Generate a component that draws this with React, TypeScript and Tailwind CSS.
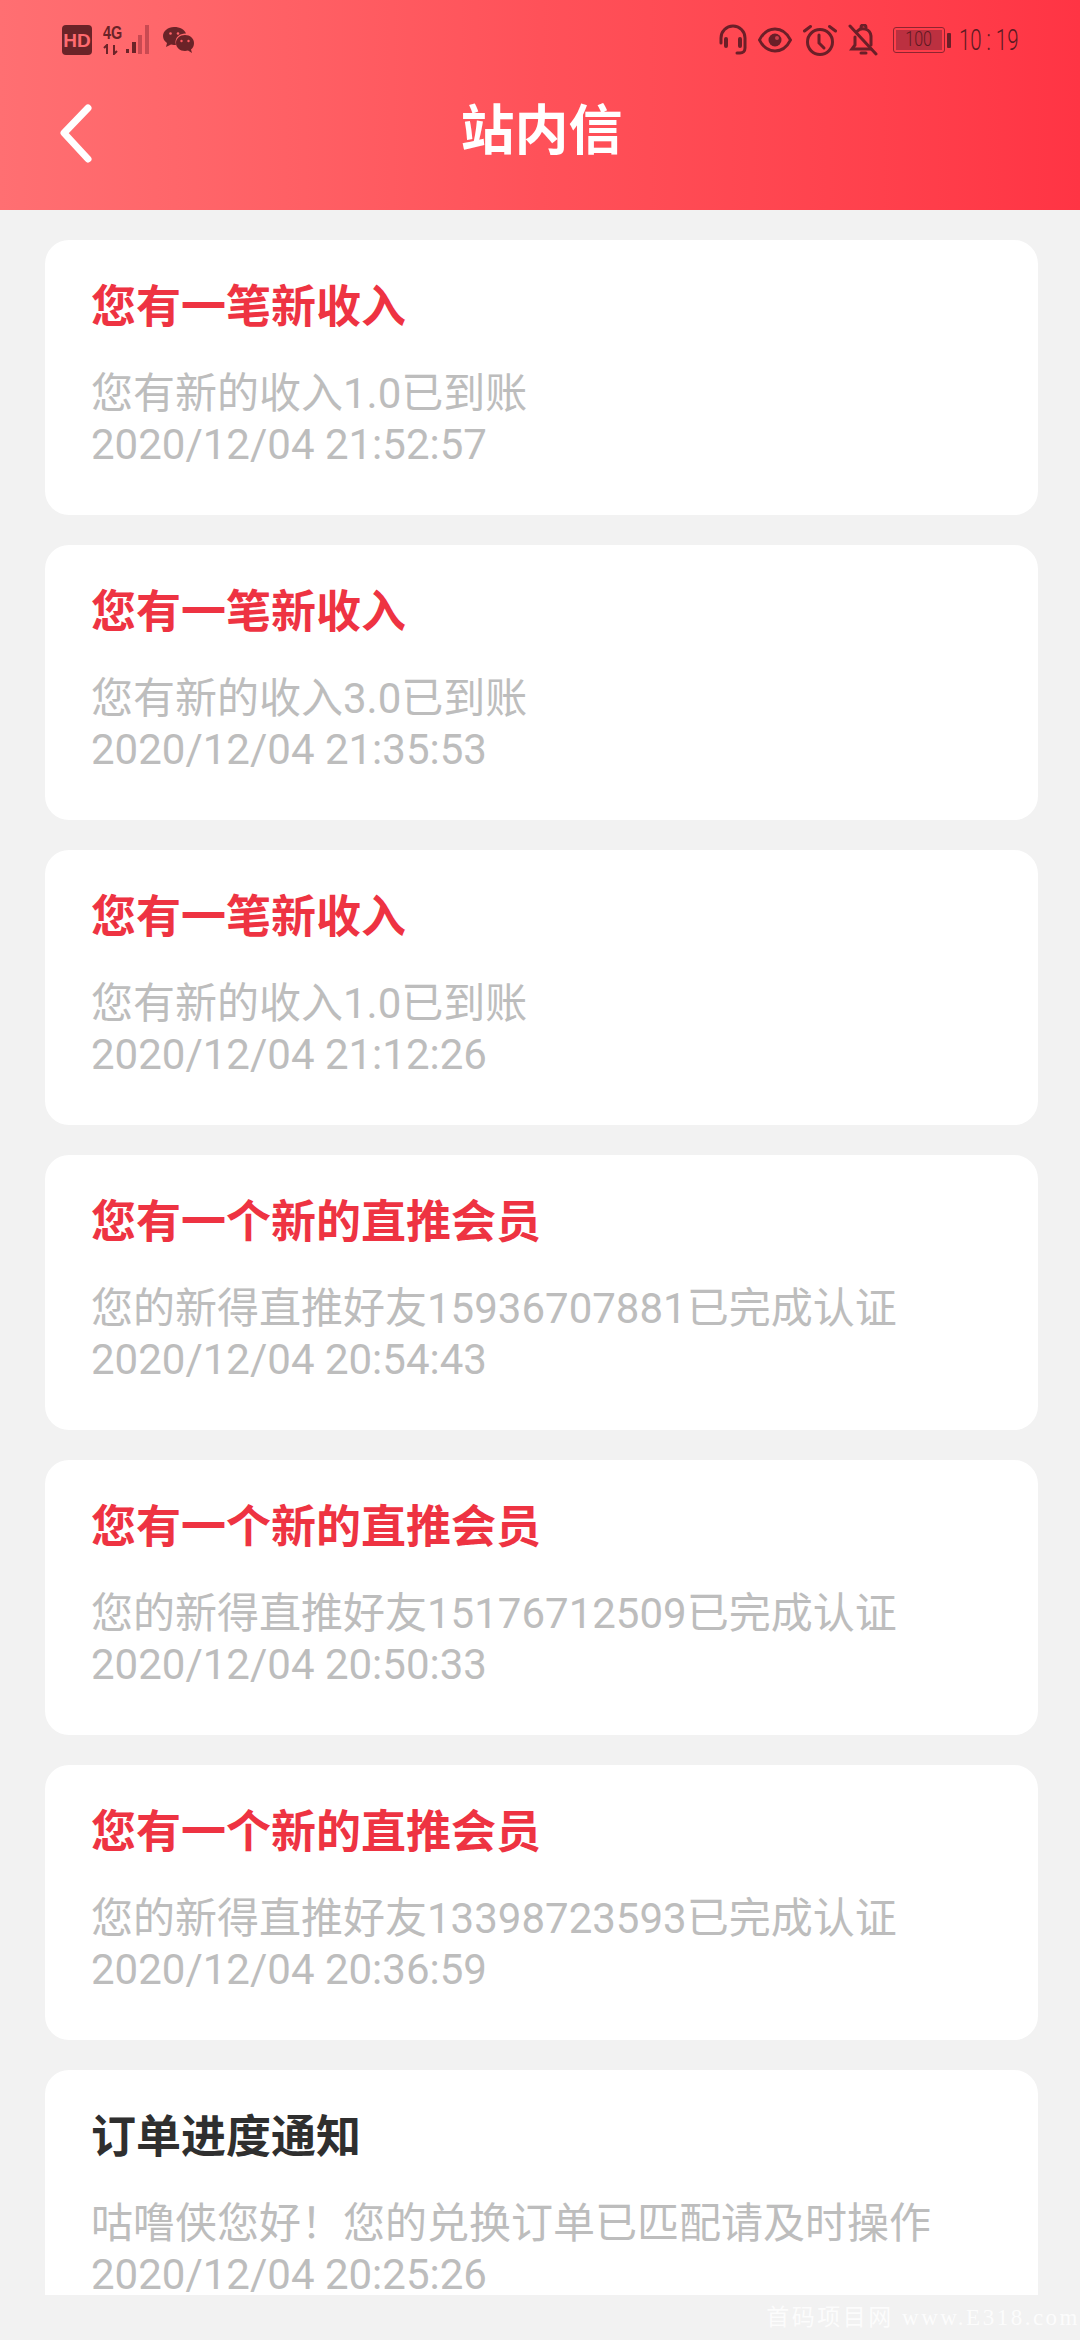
const font = { fontFamily: '"Roboto", "Noto Sans CJK SC", sans-serif' };

const items = [
  { t: "您有一笔新收入", b: "您有新的收入1.0已到账", d: "2020/12/04 21:52:57", red: true },
  { t: "您有一笔新收入", b: "您有新的收入3.0已到账", d: "2020/12/04 21:35:53", red: true },
  { t: "您有一笔新收入", b: "您有新的收入1.0已到账", d: "2020/12/04 21:12:26", red: true },
  { t: "您有一个新的直推会员", b: "您的新得直推好友15936707881已完成认证", d: "2020/12/04 20:54:43", red: true },
  { t: "您有一个新的直推会员", b: "您的新得直推好友15176712509已完成认证", d: "2020/12/04 20:50:33", red: true },
  { t: "您有一个新的直推会员", b: "您的新得直推好友13398723593已完成认证", d: "2020/12/04 20:36:59", red: true },
  { t: "订单进度通知", b: "咕噜侠您好！您的兑换订单已匹配请及时操作", d: "2020/12/04 20:25:26", red: false },
];

const DARK = "#6b1f28";

function LeftStatus() {
  return (
    <div className="flex items-center">
      <div className="w-[30px] h-[30px] rounded-[4px] bg-[#6b2328] text-[#ff6b70] text-[19px] font-bold flex items-center justify-center leading-none" style={{ fontFamily: '"Liberation Sans", sans-serif' }}>HD</div>
      <div className="ml-[11px] w-[18px] flex flex-col items-start">
        <span className="text-[#6b2328] text-[18px] leading-[15px] font-bold scale-x-[0.8] origin-left" style={{ fontFamily: '"Liberation Sans", sans-serif' }}>4G</span>
        <svg width="18" height="11" viewBox="0 0 18 11" className="mt-[3px]">
          <path d="M4 10V1L1 4M11 1v9l3-3" fill="none" stroke="#6b2328" strokeWidth="2" />
        </svg>
      </div>
      <svg width="26" height="32" viewBox="0 0 26 32" className="ml-[5px]">
        <rect x="0" y="25" width="3" height="4" fill="#6b2328" />
        <rect x="6" y="18" width="4" height="11" fill="#6b2328" />
        <rect x="12" y="11" width="4" height="19" fill="#c94a52" />
        <rect x="19" y="1" width="4" height="29" fill="#c94a52" />
      </svg>
      <svg width="32" height="28" viewBox="0 0 32 28" className="ml-[11px]">
        <path d="M11 1C5 1 0 5 0 10c0 3 1.500 5 4 7l-1 4 5-2.500c1 .3 2 .4 3 .4 1 0 1.500-.1 2-.2-.3-1-.5-1.800-.5-2.700C12.500 11 17 7.500 22 7.500c.4 0 .7 0 1 .1C21.800 3.600 17 1 11 1z" fill="#6b2328" />
        <path d="M31 17c0-4.500-4-8-9-8s-9 3.500-9 8 4 8 9 8c1 0 2-.1 3-.4l4 2.400-1-3.500c2-1.500 3-3.500 3-6.500z" fill="#6b2328" />
        <circle cx="7.500" cy="7.500" r="1.300" fill="#ff6468" />
        <circle cx="15" cy="7.500" r="1.300" fill="#ff6468" />
        <circle cx="18.500" cy="15" r="1.200" fill="#ff5a60" />
        <circle cx="25.500" cy="15" r="1.200" fill="#ff5a60" />
      </svg>
    </div>
  );
}

function RightStatus() {
  return (
    <div className="flex items-center">
      <svg width="30" height="32" viewBox="0 0 30 32" fill="none" stroke={DARK} strokeWidth="3" strokeLinecap="round">
        <path d="M3 19v-5a12 12 0 0 1 24 0v10c0 3-2 5-5 5h-3" />
        <path d="M8 15v7M22 15v7" strokeWidth="4" />
      </svg>
      <svg width="34" height="26" viewBox="0 0 34 26" fill="none" className="ml-[10px]">
        <path d="M1.500 13C5 6 10.500 2 17 2s12 4 15.500 11C29 20 23.500 24 17 24S5 20 1.500 13z" stroke={DARK} strokeWidth="2.800" />
        <circle cx="17" cy="13" r="6.500" fill={DARK} />
        <circle cx="19" cy="11" r="2" fill="#c9404c" />
      </svg>
      <svg width="34" height="32" viewBox="0 0 34 32" fill="none" stroke={DARK} strokeWidth="3" strokeLinecap="round" className="ml-[11px]">
        <circle cx="17" cy="18" r="12.500" />
        <path d="M16 11v8l5 5" />
        <path d="M1.500 7l6-4.500M32.500 7l-6-4.500" />
      </svg>
      <svg width="30" height="32" viewBox="0 0 30 32" fill="none" stroke={DARK} strokeWidth="3" strokeLinecap="round" className="ml-[11px]">
        <path d="M9 7.500A8 8 0 0 1 23 12v9M7 13v8l-3 4h19" />
        <path d="M13 3.500a2.500 2.500 0 0 1 5 0M13 29h5" />
        <path d="M2 2l26 28" />
      </svg>
      <div className="ml-[15px] w-[52px] h-[26px] rounded-[3px] border-[1.500px] border-[#8f2530] p-[2px]">
        <div className="w-[46px] h-full bg-[#bc3040] text-[#5c1a22] text-[20px] leading-[19px] flex justify-center" style={{ fontFamily: '"Roboto", sans-serif', fontWeight: 300 }}><span className="scale-x-[0.8]">100</span></div>
      </div>
      <div className="ml-[2px] w-[4px] h-[15px] rounded-[1px] bg-[#6b1f28]" />
      <div className="ml-[8px] w-[62px] h-[30px]">
        <span className="block text-[#5c1a22] text-[30px] leading-[30px] whitespace-nowrap scale-x-[0.68] origin-left" style={{ fontFamily: '"Roboto", sans-serif', fontWeight: 300 }}>10 : 19</span>
      </div>
    </div>
  );
}

function Header() {
  return (
    <div className="h-[210px] bg-gradient-to-r from-[#ff6f72] via-[#ff5159] to-[#ff3444] flex flex-col shrink-0">
      <div className="h-[82px] pl-[62px] pr-[59px] pt-[24px] flex items-start justify-between">
        <LeftStatus />
        <RightStatus />
      </div>
      <div className="h-[100px] relative flex items-center justify-center">
        <svg width="36" height="62" viewBox="0 0 36 62" fill="none" className="absolute left-[59px] top-[21px]">
          <path d="M29 5L5 30l24 26" stroke="#fff" strokeWidth="7" strokeLinecap="round" strokeLinejoin="round" />
        </svg>
        <h1 className="text-white text-[54px] leading-none font-bold ml-[3px]">站内信</h1>
      </div>
    </div>
  );
}

function Card({ t, b, d, red }: { t: string; b: string; d: string; red: boolean }) {
  return (
    <div className="h-[275px] shrink-0 rounded-[24px] bg-white px-[46px] pt-[40px]">
      <div className={`text-[45px] leading-[56px] font-bold ${red ? "text-[#ee3342]" : "text-[#2f2f2f]"}`}>{t}</div>
      <div className="mt-[32px] text-[42px] leading-[51px] text-[#bdbdbd]">{b}</div>
      <div className="text-[42px] leading-[51px] text-[#bdbdbd]">{d}</div>
    </div>
  );
}

export default function App() {
  return (
    <div className="w-[1080px] h-[2340px] bg-[#f2f2f2] flex flex-col overflow-hidden" style={font}>
      <Header />
      <div className="h-[2085px] overflow-hidden pl-[45px] pr-[42px] pt-[30px] flex flex-col gap-[30px]">
        {items.map((it, i) => (
          <Card key={i} {...it} />
        ))}
      </div>
      <div className="h-[45px] flex items-center justify-end">
        <span className="text-white text-[23px] leading-none tracking-[2.5px] whitespace-nowrap opacity-80" style={{ fontFamily: '"Liberation Serif", "Noto Sans CJK SC", serif' }}>首码项目网 www.E318.com</span>
      </div>
    </div>
  );
}
